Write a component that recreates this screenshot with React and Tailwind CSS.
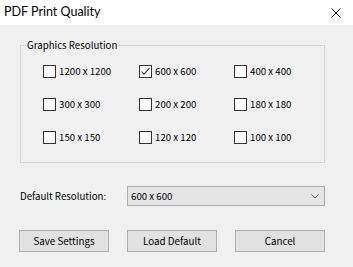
import React from 'react';

const font = { fontFamily: '"Noto Sans CJK SC", "Noto Sans", sans-serif' };
const titleFont = { fontFamily: 'Lato, "Noto Sans", sans-serif' };

const options = [
  ['1200 x 1200', false],
  ['600 x 600', true],
  ['400 x 400', false],
  ['300 x 300', false],
  ['200 x 200', false],
  ['180 x 180', false],
  ['150 x 150', false],
  ['120 x 120', false],
  ['100 x 100', false],
];

const CheckBox = ({ label, checked }) => (
  <label className="flex items-center h-[33px]">
    <span className="w-[13px] h-[13px] border border-[#333333] bg-white flex items-center justify-center">
      {checked && (
        <svg width="11" height="11" viewBox="0 0 11 11">
          <path d="M1.5 5.5 L4 8.2 L9.5 2" fill="none" stroke="#333333" strokeWidth="1.1" />
        </svg>
      )}
    </span>
    <span className="ml-[3px]">{label}</span>
  </label>
);

const Button = ({ children }) => (
  <button className="w-[90px] h-[22px] bg-[#e1e1e1] border border-[#adadad] text-[9.8px] text-black">
    {children}
  </button>
);

export default function App() {
  return (
    <div className="w-[353px] h-[267px] bg-[#f0f0f0] text-[9.7px] text-black overflow-hidden" style={font}>
      {/* Title bar */}
      <div className="h-[25px] bg-white flex items-center justify-between pl-[4px] pr-[12px]">
        <span className="text-[12.5px] text-black" style={titleFont}>PDF Print Quality</span>
        <svg width="10" height="10" viewBox="0 0 10 10">
          <path d="M0.5 0.5 L9.5 9.5 M9.5 0.5 L0.5 9.5" stroke="#111111" strokeWidth="1" />
        </svg>
      </div>

      <div className="px-[20px]">
        {/* Graphics Resolution group */}
        <fieldset className="mt-[12px] w-[305px] border border-[#d5d5d5] pt-[2px] pb-[8px]">
          <legend className="ml-[5px] px-[1px] leading-[16px]">Graphics Resolution</legend>
          <div className="grid grid-cols-[96px_95px_80px] pl-[22px]">
            {options.map(([label, checked]) => (
              <CheckBox key={label} label={label} checked={checked} />
            ))}
          </div>
        </fieldset>

        {/* Default resolution */}
        <div className="flex items-center mt-[23px]">
          <span className="w-[107px]">Default Resolution:</span>
          <div className="w-[198px] h-[20px] bg-[#e5e5e5] border border-[#acacac] flex items-center justify-between pl-[3px] pr-[5px]">
            <span>600 x 600</span>
            <svg width="8" height="5" viewBox="0 0 8 5">
              <path d="M0.5 0.5 L4 4 L7.5 0.5" fill="none" stroke="#555555" strokeWidth="1" />
            </svg>
          </div>
        </div>

        {/* Buttons */}
        <div className="flex justify-between mt-[24px] -ml-[1px] w-[306px]">
          <Button>Save Settings</Button>
          <Button>Load Default</Button>
          <Button>Cancel</Button>
        </div>
      </div>
    </div>
  );
}
